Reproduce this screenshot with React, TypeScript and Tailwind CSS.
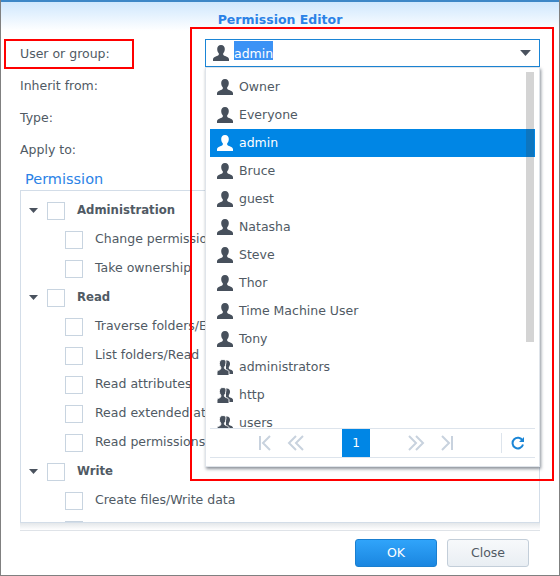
import React from 'react';

const font = 'font-["DejaVu_Sans",sans-serif]';

const UserIcon: React.FC<{ white?: boolean }> = ({ white }) => (
  <svg width="16" height="16" viewBox="0 0 16 16" className="shrink-0">
    <path
      fill={white ? '#ffffff' : '#47505c'}
      d="M8 0C5.4 0 4.200 1.700 4.200 4c0 1.700.6 3.300 1.600 4.300v1.400c-.4.800-1.600 1.200-3 1.700C1.200 12 .3 12.700 0 14v2h16v-2c-.3-1.300-1.200-2-2.800-2.600-1.400-.5-2.600-.9-3-1.700V8.300c1-1 1.600-2.600 1.600-4.300C11.800 1.700 10.600 0 8 0z"
    />
  </svg>
);

const GroupIcon: React.FC = () => (
  <svg width="16" height="16" viewBox="0 0 16 16" className="shrink-0">
    <path
      fill="#47505c"
      d="M10 1.500c2 0 3 1.400 3 3.200 0 1.300-.5 2.500-1.200 3.300v1.500c.3.600 1.100.9 2 1.300 1.200.4 1.900 1 2.200 2V15H9V1.700c.3-.1.700-.2 1-.2z"
    />
    <path
      fill="#47505c"
      stroke="#ffffff"
      strokeWidth="0.9"
      d="M6 .5C3.600.5 2.400 2.200 2.400 4.400c0 1.500.5 2.900 1.400 3.800v1.600c-.3.700-1.300 1.100-2.300 1.500-.8.300-1.300.8-1.500 1.500V16.500h12v-3.700c-.2-1-1-1.600-2.200-2-1.100-.4-2.100-.8-2.400-1.500V8.200c.9-.9 1.400-2.300 1.400-3.800C9.600 2.200 8.400.5 6 .5z"
    />
  </svg>
);

const Check: React.FC = () => <div className="w-[18px] h-[18px] shrink-0 border border-[#c8d4e0] bg-white" />;

const Caret: React.FC<{ className?: string }> = ({ className }) => (
  <svg width="9" height="5" viewBox="0 0 9 5" className={className}>
    <path d="M0 0h9L4.500 5z" fill="#4a525e" />
  </svg>
);

const permissionRows: { label: string; group?: boolean }[] = [
  { label: 'Administration', group: true },
  { label: 'Change permissions' },
  { label: 'Take ownership' },
  { label: 'Read', group: true },
  { label: 'Traverse folders/Execute files' },
  { label: 'List folders/Read\u00a0\u00a0data' },
  { label: 'Read attributes' },
  { label: 'Read extended attributes' },
  { label: 'Read permissions' },
  { label: 'Write', group: true },
  { label: 'Create files/Write data' },
  { label: 'Create folders/Append data' },
];

const users: { name: string; group?: boolean }[] = [
  { name: 'Owner' },
  { name: 'Everyone' },
  { name: 'admin' },
  { name: 'Bruce' },
  { name: 'guest' },
  { name: 'Natasha' },
  { name: 'Steve' },
  { name: 'Thor' },
  { name: 'Time Machine User' },
  { name: 'Tony' },
  { name: 'administrators', group: true },
  { name: 'http', group: true },
  { name: 'users', group: true },
];

export default function App() {
  return (
    <div className={`relative w-[560px] h-[576px] overflow-hidden bg-white text-[12.500px] text-[#505a64] border-x border-b border-[#808080] flex flex-col ${font}`}>
      <div className="h-[2px] bg-[#3d87c7] shrink-0" />
      {/* Header */}
      <div className="h-[29px] shrink-0 bg-gradient-to-b from-[#cfe7fd] to-white flex justify-center items-end">
        <span className="text-[12.500px] font-bold text-[#2b82e6] leading-[22px]">Permission Editor</span>
      </div>

      {/* Form */}
      <div className="pl-[19px] pr-[19px] pt-[7px] flex-1 min-h-0 flex flex-col">
        <div className="flex flex-col">
          {['User or group:', 'Inherit from:', 'Type:', 'Apply to:'].map((l) => (
            <div key={l} className="h-[32px] flex items-center">{l}</div>
          ))}
        </div>
        <div className="pl-[5px] h-[24px] text-[14.500px] text-[#2b82e6] leading-[22px] pt-[2px]">Permission</div>
        <div className="h-[333px] shrink-0 border border-[#d3dde8] overflow-hidden pt-[5px] pl-[8px]">
          {permissionRows.map((r) => (
            <div key={r.label} className={`h-[29px] flex items-center whitespace-nowrap ${r.group ? '' : 'pl-[36px]'}`}>
              {r.group && <Caret className="mr-[9px]" />}
              <Check />
              <span className={r.group ? 'ml-[12px] font-bold text-[11.700px]' : 'ml-[12px]'}>{r.label}</span>
            </div>
          ))}
        </div>
        <div className="h-[8px] shrink-0 bg-gradient-to-b from-[#e4e7ea] to-white border-b border-[#dfe3e8]" />
        {/* Footer */}
        <div className="flex justify-end gap-[10px] pt-[8px] pr-[11px]">
          <button className="w-[82px] h-[28px] rounded-[3px] border border-[#1a7fd0] bg-gradient-to-b from-[#30a4fa] to-[#1a86e0] text-white">OK</button>
          <button className="w-[82px] h-[28px] rounded-[3px] border border-[#c3ced9] bg-gradient-to-b from-[#f7f9fb] to-[#e9eef3] text-[#505a64]">Close</button>
        </div>
      </div>

      {/* Combo input */}
      <div className="absolute left-[204px] top-[39px] w-[335px] h-[28px] border border-[#1a85d6] bg-white flex items-center pl-[7px] pr-[8px]">
        <UserIcon />
        <span className="ml-[5px] self-start mt-[1px] bg-[#3b92f5] text-white h-[19px] leading-[25px]">admin</span>
        <Caret className="ml-auto w-[11px] h-[6px]" />
      </div>

      {/* Dropdown */}
      <div className="absolute left-[204px] top-[67px] w-[335px] h-[400px] bg-white border border-[#dfe4ea] shadow-[1px_2px_3px_rgba(60,70,85,0.6)] px-[4px] flex flex-col">
        <div className="relative h-[360px] shrink-0 overflow-hidden pt-[5px]">
          {users.map((u) => (
            <div key={u.name} className={`h-[28px] flex items-center pl-[7px] whitespace-nowrap ${u.name === 'admin' ? 'bg-[#0086e5] text-white' : ''}`}>
              {u.group ? <GroupIcon /> : <UserIcon white={u.name === 'admin'} />}
              <span className="ml-[6px]">{u.name}</span>
            </div>
          ))}
          <div className="absolute right-[1px] top-[4px] h-[270px] w-[8px] bg-[rgba(60,60,60,0.22)]" />
        </div>
        <div className="h-[30px] shrink-0 border-y border-[#dde4ec] flex items-center relative">
          <svg width="240" height="16" viewBox="0 0 240 16" className="ml-[47px]" fill="none" stroke="#c8d2de" strokeWidth="2">
            <path d="M3 1v14M13 1L6 8l7 7" />
            <path d="M39 1l-7 7 7 7M46 1l-7 7 7 7" />
            <path d="M152 1l7 7-7 7M159 1l7 7-7 7" />
            <path d="M185 1l7 7-7 7M195 1v14" />
          </svg>
          <div className="absolute left-[132px] top-0 w-[28px] h-[28px] bg-[#0086e5] text-white text-[12px] flex items-center justify-center">1</div>
          <div className="absolute left-[291px] top-[4px] h-[20px] border-l border-[#dde4ec]" />
          <svg width="14" height="14" viewBox="0 0 14 14" className="absolute left-[301px] top-[7px]" fill="none">
            <path d="M11.500 4.500A5.300 5.300 0 1 0 12 8.500" stroke="#1a85d6" strokeWidth="2" />
            <path d="M13 1v5H8z" fill="#1a85d6" />
          </svg>
        </div>
      </div>

      {/* Annotation boxes */}
      <div className="absolute left-[3px] top-[39px] w-[130px] h-[30px] border-2 border-[#ff0000]" />
      <div className="absolute left-[189px] top-[27px] w-[364px] h-[454px] border-2 border-[#ff0000]" />
    </div>
  );
}
